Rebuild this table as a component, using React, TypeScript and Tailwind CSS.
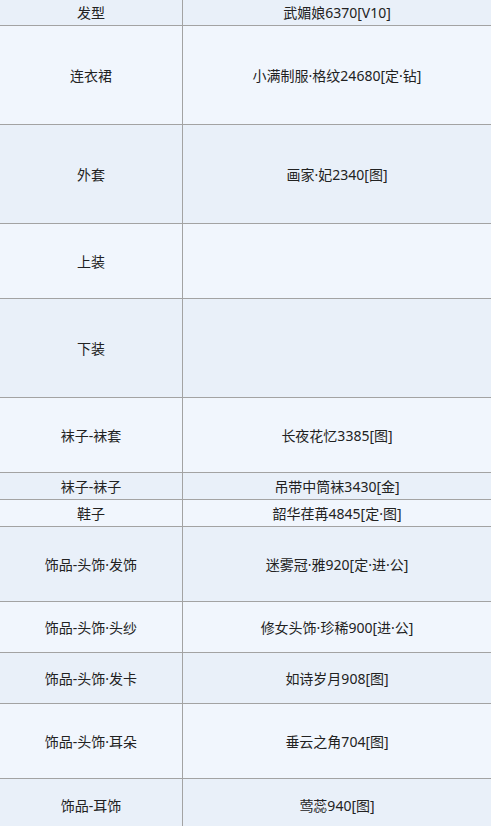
import React from "react";

const rows: { k: string; v: string; h: number }[] = [
  { k: "发型", v: "武媚娘6370[V10]", h: 25 },
  { k: "连衣裙", v: "小满制服·格纹24680[定·钻]", h: 98 },
  { k: "外套", v: "画家·妃2340[图]", h: 98 },
  { k: "上装", v: "", h: 74 },
  { k: "下装", v: "", h: 98 },
  { k: "袜子-袜套", v: "长夜花忆3385[图]", h: 74 },
  { k: "袜子-袜子", v: "吊带中筒袜3430[金]", h: 26 },
  { k: "鞋子", v: "韶华荏苒4845[定·图]", h: 26 },
  { k: "饰品-头饰·发饰", v: "迷雾冠·雅920[定·进·公]", h: 74 },
  { k: "饰品-头饰·头纱", v: "修女头饰·珍稀900[进·公]", h: 50 },
  { k: "饰品-头饰·发卡", v: "如诗岁月908[图]", h: 50 },
  { k: "饰品-头饰·耳朵", v: "垂云之角704[图]", h: 74 },
  { k: "饰品-耳饰", v: "莺蕊940[图]", h: 52 },
];

export default function App() {
  return (
    <div
      className="w-[491px] h-[826px] overflow-hidden bg-[#f1f6fd] text-[14px] text-[#222]"
      style={{ fontFamily: '"Noto Sans", "Noto Sans CJK SC", sans-serif' }}
    >
      {rows.map((r, i) => (
        <div
          key={i}
          className={`flex border-b border-[#a3a3a3] ${i % 2 === 0 ? "bg-[#e9f0f9]" : "bg-[#f1f6fd]"}`}
          style={{ height: r.h + 1 }}
        >
          <div className="w-[183px] shrink-0 flex items-center justify-center border-r border-[#a3a3a3]">
            {r.k}
          </div>
          <div className="flex-1 flex items-center justify-center">{r.v}</div>
        </div>
      ))}
    </div>
  );
}
